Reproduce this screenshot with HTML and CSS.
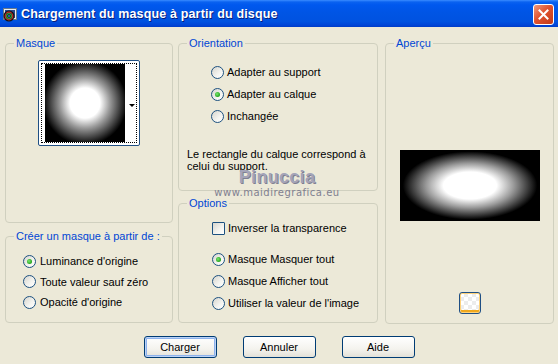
FILE: index.html
```html
<!DOCTYPE html>
<html lang="fr">
<head>
  <meta charset="UTF-8" />
  <title>Chargement du masque à partir du disque</title>
  <link rel="stylesheet" href="styles.css">
</head>
<body>

  <div class="titlebar">
    <svg class="app-icon" width="16" height="16" viewBox="0 0 16 16">
      <rect x="1.5" y="1.5" width="13" height="11" fill="#e8eef4" stroke="#6a7a8a"/>
      <rect x="3" y="3" width="10" height="8" fill="#2a4a8a"/>
      <circle cx="7" cy="9" r="5.5" fill="#111"/>
      <circle cx="7" cy="9" r="3.8" fill="none" stroke="#c03030" stroke-width="1.2"/>
      <circle cx="7" cy="9" r="2.4" fill="none" stroke="#30a040" stroke-width="1.2"/>
      <circle cx="7" cy="9" r="1" fill="#3070e0"/>
    </svg>
    <span class="title">Chargement du masque à partir du disque</span>
    <button class="close" type="button" aria-label="Fermer">
      <svg width="11" height="11" viewBox="0 0 11 11">
        <path d="M1.5 1.5 L9.5 9.5 M9.5 1.5 L1.5 9.5" stroke="#fff" stroke-width="2" stroke-linecap="square"/>
      </svg>
    </button>
  </div>

  <div class="content">
    <div class="col col-left">
      <fieldset class="group group-mask">
        <legend>Masque</legend>
        <div class="thumb">
          <div class="thumb-inner">
            <div class="mask-img"></div>
            <span class="drop-arrow"></span>
          </div>
        </div>
      </fieldset>
      <fieldset class="group group-source">
        <legend>Créer un masque à partir de :</legend>
        <div class="group-body body-source">
          <div class="row row-s"><span class="radio on"></span>Luminance d'origine</div>
          <div class="row row-s"><span class="radio"></span>Toute valeur sauf zéro</div>
          <div class="row row-s"><span class="radio"></span>Opacité d'origine</div>
        </div>
      </fieldset>
    </div>

    <div class="col col-mid">
      <fieldset class="group group-orient">
        <legend>Orientation</legend>
        <div class="group-body body-orient">
          <div class="row"><span class="radio"></span>Adapter au support</div>
          <div class="row"><span class="radio on"></span>Adapter au calque</div>
          <div class="row"><span class="radio"></span>Inchangée</div>
        </div>
        <p class="note">Le rectangle du calque correspond à celui du support.</p>
      </fieldset>
      <fieldset class="group group-options">
        <legend>Options</legend>
        <div class="group-body body-options">
          <div class="row"><span class="check"></span>Inverser la transparence</div>
          <div class="row row-gap"><span class="radio on"></span>Masque Masquer tout</div>
          <div class="row"><span class="radio"></span>Masque Afficher tout</div>
          <div class="row"><span class="radio"></span>Utiliser la valeur de l'image</div>
        </div>
      </fieldset>
    </div>

    <fieldset class="group group-preview">
      <legend>Aperçu</legend>
      <div class="preview-body">
        <div class="preview-img"></div>
        <button class="swatch" type="button" aria-label="Arrière-plan"></button>
      </div>
    </fieldset>
  </div>

  <div class="buttons">
    <button class="btn btn-default" type="button">Charger</button>
    <button class="btn" type="button">Annuler</button>
    <button class="btn" type="button">Aide</button>
  </div>

  <div class="watermark">
    <span class="wm-name">Pinuccia</span>
    <span class="wm-url">www.maidiregrafica.eu</span>
  </div>

</body>
</html>
```

FILE: styles.css
```css
* {
  box-sizing: border-box;
}

body {
  margin: 0;
  width: 558px;
  height: 364px;
  overflow: hidden;
  background: #ece9d8;
  font-family: 'Liberation Sans', Arial, sans-serif;
  font-size: 11px;
  color: #000;
}

/* barre de titre */
.titlebar {
  height: 27px;
  display: flex;
  align-items: center;
  padding: 0 4px 0 2px;
  background: linear-gradient(#3a8cff 0, #0a62f0 2px, #0058ee 5px, #0055e5 45%, #0052e0 80%, #0046d8 92%, #003cc8 100%);
}

.app-icon {
  flex: none;
  margin-top: 2px;
}

.title {
  flex: 1;
  margin-left: 3px;
  color: #fff;
  font-weight: bold;
  font-size: 12.5px;
  letter-spacing: 0.15px;
  text-shadow: 1px 1px 0 #0a1e7a;
}

.close {
  width: 21px;
  height: 21px;
  padding: 0;
  margin-top: 1px;
  border: 1px solid #fff;
  border-radius: 3px;
  background: linear-gradient(135deg, #f09a7e, #e0532f 45%, #c23a17);
  display: flex;
  align-items: center;
  justify-content: center;
}

/* zone principale */
.content {
  display: flex;
  gap: 5px;
  padding: 10px 0 0 5px;
}

.col {
  display: flex;
  flex-direction: column;
}

.col-left {
  width: 168px;
  gap: 7px;
}

.col-mid {
  width: 200px;
  gap: 6px;
}

.group {
  margin: 0;
  padding: 0;
  border: 1px solid #d0d0bf;
  border-radius: 4px;
  min-width: 0;
}

.group legend {
  margin-left: 8px;
  padding: 0 2px;
  color: #0046d5;
  line-height: 13px;
  white-space: nowrap;
}

.group-mask {
  height: 186px;
}

.group-source {
  height: 93px;
}

.group-orient {
  height: 154px;
}

.group-options {
  height: 126px;
}

.group-preview {
  width: 169px;
  height: 287px;
  margin-left: 2px;
}

.body-source {
  padding: 8px 0 0 17px;
}

.body-orient {
  padding: 11px 0 0 32px;
}

.body-options {
  padding: 7px 0 0 33px;
}

.row {
  height: 22px;
  display: flex;
  align-items: center;
  gap: 3px;
  white-space: nowrap;
}

.row-s {
  height: 20.5px;
  gap: 4px;
}

.row-gap {
  margin-top: 9px;
}

.note {
  margin: 21px 0 0 8px;
  line-height: 12px;
  width: 190px;
}

/* boutons radio et case */
.radio,
.check {
  flex: none;
  position: relative;
  width: 13px;
  height: 13px;
  border: 1px solid #1c5180;
  background: linear-gradient(135deg, #d6d5ce, #f4f4f0 60%, #fff);
}

.radio {
  border-radius: 50%;
}

.radio.on::after {
  content: '';
  position: absolute;
  top: 3px;
  left: 3px;
  width: 5px;
  height: 5px;
  border-radius: 50%;
  background: radial-gradient(circle at 40% 40%, #7ae86e, #22a21c 70%);
}

.check {
  border-radius: 1px;
}

/* vignette du masque */
.thumb {
  width: 102px;
  height: 86px;
  margin: 10px auto 0;
  padding: 2px;
  border: 1px solid #1f4f84;
  border-radius: 2px;
  background: #fff;
}

.thumb-inner {
  height: 100%;
  border: 1px dotted #000;
  display: flex;
  align-items: center;
  justify-content: space-between;
  padding: 0 1px 0 3px;
}

.mask-img {
  width: 80px;
  height: 78px;
  background: radial-gradient(circle at 50% 50%, #fff 0, #fff 15px, #9a9a9a 25px, #000 42px);
}

.drop-arrow {
  width: 0;
  height: 0;
  margin-top: 4px;
  border-left: 3px solid transparent;
  border-right: 3px solid transparent;
  border-top: 3px solid #000;
}

/* aperçu */
.preview-body {
  display: flex;
  flex-direction: column;
  align-items: center;
}

.preview-img {
  width: 140px;
  height: 71px;
  margin-top: 100px;
  background: radial-gradient(ellipse closest-side at 50% 50%, #fff 0, #fff 38%, #9c9c9c 62%, #000 96%);
}

.swatch {
  width: 22px;
  height: 22px;
  margin-top: 71px;
  padding: 0;
  border: 1px solid #1f4f84;
  border-radius: 3px;
  box-shadow: inset 0 0 0 1px #ffd27a, inset 0 -2px 0 1px #f0a81c;
  background-color: #fff;
  background-image:
    linear-gradient(45deg, #ececec 25%, transparent 25%, transparent 75%, #ececec 75%),
    linear-gradient(45deg, #ececec 25%, transparent 25%, transparent 75%, #ececec 75%);
  background-size: 8px 8px;
  background-position: 0 0, 4px 4px;
}

/* boutons du bas */
.buttons {
  display: flex;
  justify-content: center;
  gap: 26px;
  margin-top: 12px;
}

.btn {
  width: 73px;
  height: 22px;
  padding: 0;
  border: 1px solid #003c74;
  border-radius: 3px;
  background: linear-gradient(#fff, #f4f3ee 60%, #e3e1d8);
  font-family: inherit;
  font-size: 11px;
  color: #000;
}

.btn-default {
  box-shadow: inset 0 0 0 1px #bcd3f6, inset 0 0 0 2px #8db2ec;
}

/* filigrane */
.watermark {
  position: absolute;
  left: 214px;
  top: 167px;
  width: 126px;
  display: flex;
  flex-direction: column;
  align-items: center;
  pointer-events: none;
}

.wm-name {
  font-family: 'Liberation Sans', sans-serif;
  font-size: 18px;
  font-weight: bold;
  letter-spacing: 0.3px;
  color: #a4a4b8;
  text-shadow: 1px 1px 0 #7f7f92;
  line-height: 20px;
}

.wm-url {
  font-family: 'DejaVu Sans', sans-serif;
  font-size: 10px;
  letter-spacing: 0.5px;
  color: #808090;
  line-height: 12px;
}
```
